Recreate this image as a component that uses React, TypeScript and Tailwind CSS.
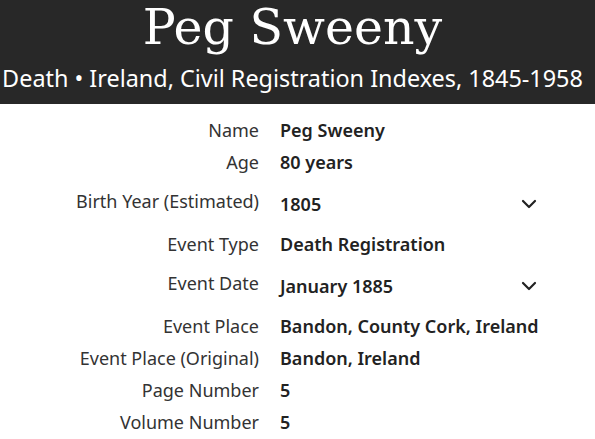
import React from "react";

const rows: { label: string; value: string; chevron?: boolean }[] = [
  { label: "Name", value: "Peg Sweeny" },
  { label: "Age", value: "80 years" },
  { label: "Birth Year (Estimated)", value: "1805", chevron: true },
  { label: "Event Type", value: "Death Registration" },
  { label: "Event Date", value: "January 1885", chevron: true },
  { label: "Event Place", value: "Bandon, County Cork, Ireland" },
  { label: "Event Place (Original)", value: "Bandon, Ireland" },
  { label: "Page Number", value: "5" },
  { label: "Volume Number", value: "5" },
];

function Chevron() {
  return (
    <svg width="16" height="10" viewBox="0 0 16 10" fill="none">
      <path d="M2 2 L8 8 L14 2" stroke="#222" strokeWidth="2.2" strokeLinecap="round" strokeLinejoin="round" />
    </svg>
  );
}

export default function App() {
  return (
    <div className="w-[595px] h-[439px] overflow-hidden bg-white" style={{ fontFamily: '"Noto Sans", sans-serif' }}>
      <div className="h-[104px] bg-[#282828] text-white flex flex-col items-center pr-[10px]">
        <div className="text-[49px] leading-[58px] mt-[-1px]" style={{ fontFamily: '"DejaVu Serif", serif' }}>
          Peg Sweeny
        </div>
        <div className="text-[23.4px] leading-[30px] mt-[6px] whitespace-nowrap">
          Death • Ireland, Civil Registration Indexes, 1845-1958
        </div>
      </div>
      <div className="pt-[10px]">
        {rows.map((r) =>
          r.chevron ? (
            <div key={r.label} className="flex h-[50px]">
              <div className="w-[259px] text-right text-[18px] leading-[24px] text-[#333] pt-[11px]">{r.label}</div>
              <div className="ml-[21px] w-[255px] flex items-start justify-between pt-[14px]">
                <span className="text-[18px] leading-[24px] font-semibold text-[#222]">{r.value}</span>
                <span className="mt-[7px] mr-[-2px]">
                  <Chevron />
                </span>
              </div>
            </div>
          ) : (
            <div key={r.label} className="flex py-[4px]">
              <div className="w-[259px] text-right text-[18px] leading-[24px] text-[#333]">{r.label}</div>
              <div className="ml-[21px] text-[18px] leading-[24px] font-semibold text-[#222]">{r.value}</div>
            </div>
          )
        )}
      </div>
    </div>
  );
}
